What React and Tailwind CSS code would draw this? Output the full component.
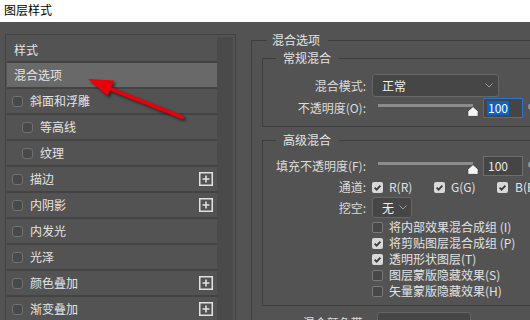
import React from "react";

const FONT = { fontFamily: '"Noto Sans CJK SC", "Noto Sans", sans-serif' };

function SideCheck() {
  return <div className="w-[11px] h-[11px] rounded-[3px] border border-[#717171] bg-[#494949] shrink-0" />;
}

function Plus() {
  return (
    <svg width="14" height="14" viewBox="0 0 14 14" className="shrink-0">
      <rect x="0.75" y="0.75" width="12.5" height="12.5" fill="none" stroke="#e2e2e2" strokeWidth="1.5" />
      <path d="M7 3.5V10.5M3.5 7H10.5" stroke="#e2e2e2" strokeWidth="1.6" />
    </svg>
  );
}

function Row({ label, indent, plus, highlight, header }) {
  return (
    <div
      className={`h-[26px] border-b-2 border-[#434343] flex items-center ${highlight ? "bg-[#696969]" : ""} ${
        header ? "pl-[7px]" : indent ? "pl-[15px]" : "pl-[5px]"
      } ${header && !highlight ? "pt-[2px]" : ""}`}
    >
      {!header && !highlight && <SideCheck />}
      <span className={`${header || highlight ? "" : "ml-[7px]"} text-[12px] leading-[16px] text-[#e4e4e4] flex-1`}>
        {label}
      </span>
      {plus && <div className="mr-[4px]"><Plus /></div>}
    </div>
  );
}

function Check({ on }) {
  if (on)
    return (
      <svg width="11" height="11" viewBox="0 0 11 11" className="shrink-0">
        <rect x="0" y="0" width="11" height="11" rx="2" fill="#d8d8d8" />
        <path d="M2.6 5.6L4.6 7.6L8.4 3.6" fill="none" stroke="#3c3c3c" strokeWidth="1.8" />
      </svg>
    );
  return <div className="w-[11px] h-[11px] rounded-[2px] border border-[#7a7a7a] bg-[#474747] shrink-0" />;
}

function Chevron() {
  return (
    <svg width="8" height="5" viewBox="0 0 8 5">
      <path d="M0.5 0.5L4 4L7.5 0.5" fill="none" stroke="#9a9a9a" strokeWidth="1" />
    </svg>
  );
}

function Label({ children, w = "w-[103px]" }) {
  return <div className={`${w} text-right text-[12px] leading-[16px] text-[#dcdcdc] shrink-0`}>{children}</div>;
}

function Slider() {
  return (
    <div className="relative w-[105px] h-[20px] ml-[12px] shrink-0">
      <div className="absolute left-0 top-[6px] w-[95px] h-[3px] bg-[#8c8c8c]" />
      <svg className="absolute left-[89px] top-[8px]" width="12" height="11" viewBox="0 0 12 11">
        <path d="M6 0.6L11.2 5.2V9.4Q11.2 10.4 10.2 10.4H1.8Q0.8 10.4 0.8 9.4V5.2Z" fill="#f4f4f4" stroke="#2e2e2e" strokeWidth="0.8" />
      </svg>
    </div>
  );
}

function Input({ active }) {
  return (
    <div
      className={`w-[40px] h-[20px] border ${active ? "border-[#2a74d0]" : "border-[#6e6e6e]"} bg-[#454545] flex items-center pl-[3px] shrink-0`}
    >
      <span
        className={`text-[12px] leading-[14px] px-[1px] ${active ? "bg-[#0a64c8] text-white" : "text-[#e8e8e8]"}`}
      >
        100
      </span>
    </div>
  );
}

function Opt({ on, label }) {
  return (
    <div className="h-[16px] flex items-center pl-[109px]">
      <Check on={on} />
      <span className="ml-[6px] text-[12px] leading-[16px] text-[#e2e2e2] whitespace-nowrap">{label}</span>
    </div>
  );
}

export default function App() {
  return (
    <div className="relative w-[530px] h-[320px] overflow-hidden bg-[#535353]" style={FONT}>
      <div className="h-[22px] bg-white pl-[4px] pt-[1px] text-[12px] leading-[18px] text-black">图层样式</div>
      <div className="flex h-[298px]">
        {/* left panel */}
        <div className="ml-[5px] mt-[12px] w-[231px] h-[300px] border border-[#424242] px-[1px] pt-[2px] flex shrink-0">
          <div className="w-[210px]">
            <Row label="样式" header />
            <Row label="混合选项" highlight header />
            <Row label="斜面和浮雕" />
            <Row label="等高线" indent />
            <Row label="纹理" indent />
            <Row label="描边" plus />
            <Row label="内阴影" plus />
            <Row label="内发光" />
            <Row label="光泽" />
            <Row label="颜色叠加" plus />
            <Row label="渐变叠加" plus />
          </div>
          <div className="w-[16px] bg-[#4a4a4a]" />
        </div>
        {/* right */}
        <div className="ml-[15px] mt-[10px] w-[330px] shrink-0">
          <fieldset className="border border-[#3e3e3e] pl-[10px] pb-[30px] w-[330px]">
            <legend className="ml-[5px] pl-[5px] pr-[8px] text-[12px] leading-[16px] text-[#e4e4e4]">混合选项</legend>
            <fieldset className="mt-[2px] border border-[#3e3e3e] pb-[8px]">
              <legend className="ml-[13px] pl-[7px] pr-[8px] text-[12px] leading-[16px] text-[#e4e4e4]">常规混合</legend>
              <div className="mt-[8px] h-[23px] flex items-center">
                <Label>混合模式:</Label>
                <div className="ml-[6px] w-[127px] h-[23px] rounded-[3px] border border-[#666666] bg-[#464646] flex items-center pl-[9px] pr-[5px]">
                  <span className="flex-1 text-[12px] leading-[16px] text-[#f0f0f0]">正常</span>
                  <Chevron />
                </div>
              </div>
              <div className="mt-[1px] h-[20px] flex items-center">
                <Label>不透明度(O):</Label>
                <Slider />
                <Input active />
                <span className="ml-[5px] text-[12px] text-[#cfcfcf]">%</span>
              </div>
            </fieldset>
            <fieldset className="mt-[5px] border border-[#3e3e3e] pb-[6px]">
              <legend className="ml-[13px] pl-[7px] pr-[8px] text-[12px] leading-[16px] text-[#e4e4e4]">高级混合</legend>
              <div className="mt-[8px] h-[20px] flex items-center">
                <Label>填充不透明度(F):</Label>
                <Slider />
                <Input />
                <span className="ml-[5px] text-[12px] text-[#cfcfcf]">%</span>
              </div>
              <div className="mt-[1px] h-[20px] flex items-center">
                <Label>通道:</Label>
                <div className="ml-[6px] w-[62px] flex items-center shrink-0">
                  <Check on />
                  <span className="ml-[6px] text-[12px] leading-[16px] text-[#e2e2e2]">R(R)</span>
                </div>
                <div className="w-[63px] flex items-center shrink-0">
                  <Check on />
                  <span className="ml-[6px] text-[12px] leading-[16px] text-[#e2e2e2]">G(G)</span>
                </div>
                <div className="flex items-center shrink-0">
                  <Check on />
                  <span className="ml-[7px] text-[12px] leading-[16px] text-[#e2e2e2]">B(B)</span>
                </div>
              </div>
              <div className="h-[21px] flex items-center">
                <Label>挖空:</Label>
                <div className="ml-[6px] w-[40px] h-[21px] rounded-[3px] border border-[#666666] bg-[#464646] flex items-center pl-[9px] pr-[4px]">
                  <span className="flex-1 text-[12px] leading-[16px] text-[#f0f0f0]">无</span>
                  <Chevron />
                </div>
              </div>
              <div className="mt-[1px]">
                <Opt label="将内部效果混合成组 (I)" />
                <Opt on label="将剪贴图层混合成组 (P)" />
                <Opt on label="透明形状图层(T)" />
                <Opt label="图层蒙版隐藏效果(S)" />
                <Opt label="矢量蒙版隐藏效果(H)" />
              </div>
            </fieldset>
            <div className="mt-[6px] h-[22px] flex items-start">
              <div className="w-[104px] pt-[3px] text-right text-[12px] leading-[16px] text-[#dcdcdc] shrink-0">混合颜色带:</div>
              <div className="ml-[11px] w-[94px] h-[22px] rounded-[3px] border border-[#666666] bg-[#464646]" />
            </div>
          </fieldset>
        </div>
      </div>
      {/* red arrow */}
      <svg className="absolute left-0 top-0 pointer-events-none" width="530" height="320" viewBox="0 0 530 320">
        <g style={{ filter: "drop-shadow(2px 2px 1.5px rgba(0,0,0,0.55))" }}>
          <line x1="182" y1="117" x2="106" y2="87" stroke="#e8000a" strokeWidth="4" strokeLinecap="round" />
          <polygon points="88,79 114,80.5 107.5,96" fill="#e8000a" />
        </g>
      </svg>
    </div>
  );
}
